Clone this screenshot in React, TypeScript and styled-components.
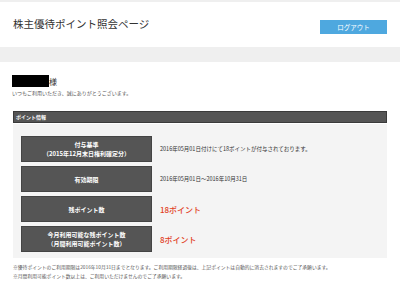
import React from 'react';
import styled, { createGlobalStyle } from 'styled-components';

const GlobalStyle = createGlobalStyle`
  body {
    margin: 0;
    background: #efefef;
    font-family: "Noto Sans CJK JP", "Noto Sans", sans-serif;
    color: #333;
  }
`;

const Header = styled.header`
  align-items: center;
  background: #fff;
  display: flex;
  height: 45px;
  justify-content: space-between;
  margin-top: 2px;
  padding: 0 13px;
`;

const Title = styled.h1`
  font-size: 10.5px;
  font-weight: 400;
  margin: 0 0 3px;
`;

const LogoutButton = styled.button`
  background: #4ea8df;
  border: 0;
  color: #fff;
  font-family: inherit;
  font-size: 6.5px;
  height: 14px;
  margin-top: 4px;
  padding: 0;
  width: 67px;
`;

const Main = styled.main`
  background: #fff;
  margin-top: 15px;
  padding: 13px 13px 8px;
`;

const Greeting = styled.div`
  align-items: flex-end;
  display: flex;
`;

const NameMask = styled.span`
  background: #000;
  display: inline-block;
  height: 12px;
  margin-left: -1px;
  width: 37px;
`;

const Honorific = styled.span`
  font-size: 8px;
  line-height: 10px;
`;

const Thanks = styled.p`
  color: #555;
  font-size: 5px;
  margin: 2px 0 15px -1px;
`;

const SectionBar = styled.div`
  background: #555;
  border: 1px solid #3a3a3a;
  color: #fff;
  font-size: 5px;
  font-weight: 700;
  height: 10px;
  line-height: 10px;
  padding: 0 2px;
`;

const Panel = styled.div`
  background: #f4f4f4;
  display: flex;
  flex-direction: column;
  gap: 4px;
  margin-top: 1px;
  padding: 12px 8px 6px;
`;

const Row = styled.div`
  align-items: center;
  display: grid;
  gap: 8px;
  grid-template-columns: 131px 1fr;
`;

const Label = styled.div`
  align-items: center;
  background: #555;
  border: 1px solid #444;
  box-sizing: border-box;
  color: #fff;
  display: flex;
  flex-direction: column;
  font-size: 6px;
  font-weight: 700;
  height: 26px;
  justify-content: center;
  line-height: 9px;
  text-align: center;
`;

const Value = styled.div<{ $strong?: boolean }>`
  color: ${p => (p.$strong ? '#e2401e' : '#333')};
  font-size: ${p => (p.$strong ? '8px' : '5.5px')};
  font-weight: ${p => (p.$strong ? 500 : 400)};
`;

const Notes = styled.div`
  color: #555;
  font-size: 4.8px;
  line-height: 9px;
  margin-top: 4px;
`;

const rows = [
  { label: ['付与基準', '（2015年12月末日権利確定分）'], value: '2016年05月01日付けにて18ポイントが付与されております。' },
  { label: ['有効期限'], value: '2016年05月01日～2016年10月31日' },
  { label: ['残ポイント数'], value: '18ポイント', strong: true },
  { label: ['今月利用可能な残ポイント数', '（月間利用可能ポイント数）'], value: '8ポイント', strong: true },
];

export default function App() {
  return (
    <>
      <GlobalStyle />
      <Header>
        <Title>株主優待ポイント照会ページ</Title>
        <LogoutButton>ログアウト</LogoutButton>
      </Header>
      <Main>
        <Greeting>
          <NameMask />
          <Honorific>様</Honorific>
        </Greeting>
        <Thanks>いつもご利用いただき、誠にありがとうございます。</Thanks>
        <SectionBar>ポイント情報</SectionBar>
        <Panel>
          {rows.map(r => (
            <Row key={r.label[0]}>
              <Label>
                {r.label.map(l => (
                  <span key={l}>{l}</span>
                ))}
              </Label>
              <Value $strong={r.strong}>{r.value}</Value>
            </Row>
          ))}
        </Panel>
        <Notes>
          <div>※優待ポイントのご利用期限は2016年10月31日までとなります。ご利用期限経過後は、上記ポイントは自動的に消去されますのでご了承願います。</div>
          <div>※月間利用可能ポイント数以上は、ご利用いただけませんのでご了承願います。</div>
        </Notes>
      </Main>
    </>
  );
}
